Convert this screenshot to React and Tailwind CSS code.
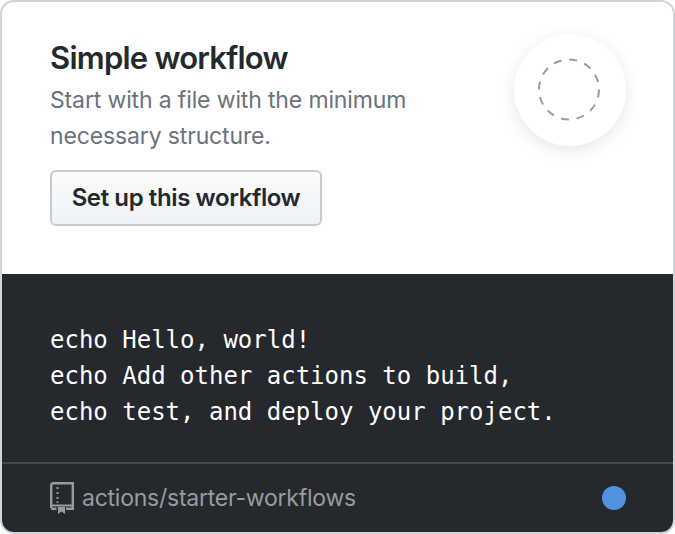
import React from 'react'

const RepoIcon = () => (
  <svg width="24" height="32" viewBox="0 0 24 32" fill="none" className="shrink-0">
    <path d="M1.2 26V3.5C1.2 2.2 2.2 1.2 3.5 1.2H22.8V26.8H16" stroke="#999b9e" strokeWidth="2.4" />
    <path d="M1.2 23.5H22.8" stroke="#999b9e" strokeWidth="2" />
    <path d="M1.2 26.8H6.5" stroke="#999b9e" strokeWidth="2.4" />
    <path d="M7.5 5V7M7.5 10V12M7.5 15V17M7.5 19.5V21" stroke="#999b9e" strokeWidth="2" />
    <path d="M8 25H15V32L11.5 29.6L8 32Z" fill="#999b9e" />
  </svg>
)

const App = () => {
  return (
    <div className="w-[675px] h-[534px] bg-white font-['Inter',sans-serif]">
      <div className="h-full flex flex-col border-2 border-[#d1d5da] rounded-[14px] overflow-hidden">
        <div className="h-[272px] shrink-0 flex justify-between pl-[48px] pr-[47px] pt-[32px]">
          <div className="w-[400px]">
            <h2 className="text-[31px] leading-[48px] font-semibold tracking-[-0.77px] text-[#24292e]">Simple workflow</h2>
            <p className="text-[23px] leading-[36px] text-[#6a737d] tracking-[-0.14px]">Start with a file with the minimum necessary structure.</p>
            <button className="mt-[16px] w-[272px] h-[56px] rounded-[6px] border-2 border-[#c9cbcf] bg-gradient-to-b from-[#fafbfc] to-[#eff3f6] text-[24px] font-semibold tracking-[-0.4px] text-[#24292e]">
              Set up this workflow
            </button>
          </div>
          <div className="w-[112px] h-[112px] rounded-full bg-white shadow-[0_4px_16px_rgba(0,0,0,0.1)] flex items-center justify-center">
            <svg width="64" height="64" viewBox="0 0 64 64" fill="none">
              <circle cx="31" cy="31.5" r="30" stroke="#959da5" strokeWidth="2" strokeDasharray="8 7.7" />
            </svg>
          </div>
        </div>
        <div className="flex-1 flex flex-col bg-[#25282d]">
          <pre className="h-[188px] shrink-0 pl-[48px] pt-[48px] font-['DejaVu_Sans_Mono',monospace] text-[24px] leading-[36px] text-white">
            {'echo Hello, world!\necho Add other actions to build,\necho test, and deploy your project.'}
          </pre>
          <div className="flex-1 flex items-center justify-between border-t-2 border-[#45494d] pl-[48px] pr-[47px]">
            <div className="flex items-center gap-[8px]">
              <RepoIcon />
              <span className="text-[23px] tracking-[-0.24px] text-[#999b9e]">actions/starter-workflows</span>
            </div>
            <span className="w-[24px] h-[24px] rounded-full bg-[#5192e0]" />
          </div>
        </div>
      </div>
    </div>
  )
}

export default App
